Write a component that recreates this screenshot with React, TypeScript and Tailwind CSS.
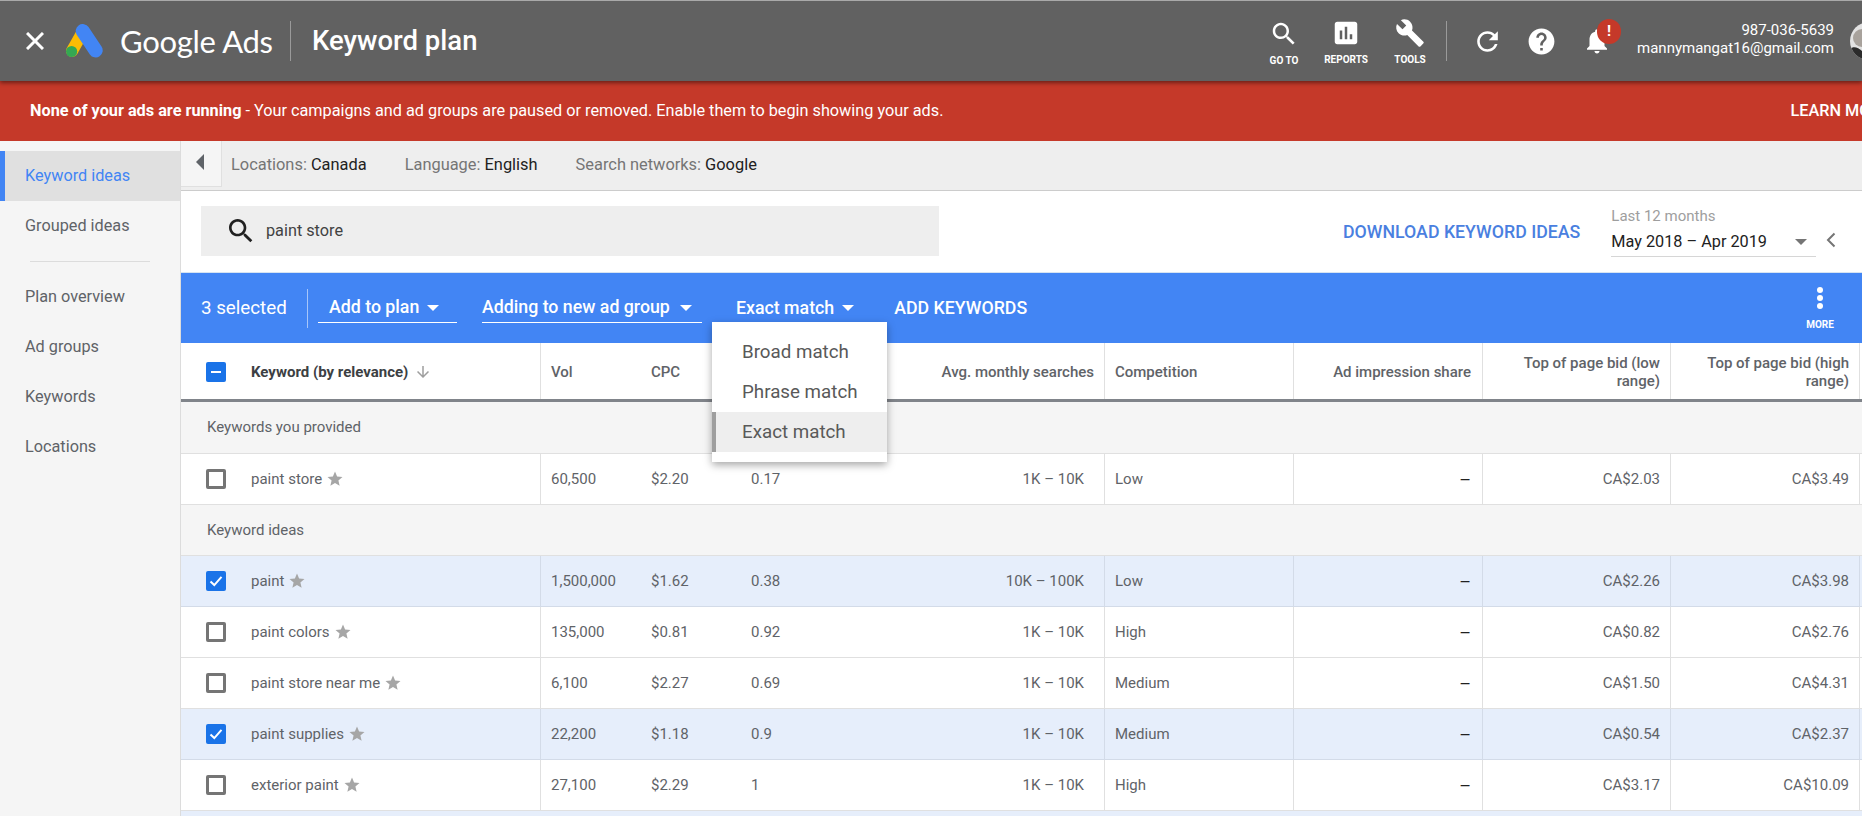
import React from 'react';

type RowData = {
  keyword: string;
  selected?: boolean;
  vol: string;
  cpc: string;
  comp: string;
  avg: string;
  competition: string;
  low: string;
  high: string;
};

const provided: RowData[] = [
  { keyword: 'paint store', vol: '60,500', cpc: '$2.20', comp: '0.17', avg: '1K – 10K', competition: 'Low', low: 'CA$2.03', high: 'CA$3.49' },
];

const ideas: RowData[] = [
  { keyword: 'paint', selected: true, vol: '1,500,000', cpc: '$1.62', comp: '0.38', avg: '10K – 100K', competition: 'Low', low: 'CA$2.26', high: 'CA$3.98' },
  { keyword: 'paint colors', vol: '135,000', cpc: '$0.81', comp: '0.92', avg: '1K – 10K', competition: 'High', low: 'CA$0.82', high: 'CA$2.76' },
  { keyword: 'paint store near me', vol: '6,100', cpc: '$2.27', comp: '0.69', avg: '1K – 10K', competition: 'Medium', low: 'CA$1.50', high: 'CA$4.31' },
  { keyword: 'paint supplies', selected: true, vol: '22,200', cpc: '$1.18', comp: '0.9', avg: '1K – 10K', competition: 'Medium', low: 'CA$0.54', high: 'CA$2.37' },
  { keyword: 'exterior paint', vol: '27,100', cpc: '$2.29', comp: '1', avg: '1K – 10K', competition: 'High', low: 'CA$3.17', high: 'CA$10.09' },
];

const GRID = 'grid grid-cols-[360px_100px_100px_100px_264px_189px_189px_188px_189px_2px]';

const Caret = ({ className = 'fill-white' }: { className?: string }) => (
  <svg width="12" height="6" viewBox="0 0 12 6" className={`shrink-0 ${className}`}>
    <path d="M0 0h12L6 6z" />
  </svg>
);

const Icon = ({ d, size, className = 'fill-white' }: { d: string; size: number; className?: string }) => (
  <svg width={size} height={size} viewBox="0 0 24 24" className={`shrink-0 ${className}`}>
    <path d={d} />
  </svg>
);

const SEARCH = 'M15.5 14h-.79l-.28-.27C15.41 12.59 16 11.11 16 9.5 16 5.91 13.09 3 9.5 3S3 5.91 3 9.5 5.91 16 9.5 16c1.61 0 3.09-.59 4.23-1.57l.27.28v.79l5 4.99L20.49 19l-4.99-5zm-6 0C7.01 14 5 11.99 5 9.5S7.01 5 9.5 5 14 7.01 14 9.5 11.99 14 9.5 14z';
const REPORTS = 'M19 3H5c-1.1 0-2 .9-2 2v14c0 1.1.9 2 2 2h14c1.1 0 2-.9 2-2V5c0-1.1-.9-2-2-2zM9 17H7v-7h2v7zm4 0h-2V7h2v10zm4 0h-2v-4h2v4z';
const WRENCH = 'M22.7 19l-9.1-9.1c.9-2.3.4-5-1.5-6.9-2-2-5-2.4-7.4-1.3L9 6 6 9 1.6 4.7C.4 7.1.9 10.1 2.9 12.1c1.9 1.9 4.6 2.4 6.9 1.5l9.1 9.1c.4.4 1 .4 1.4 0l2.3-2.3c.5-.4.5-1.1.1-1.4z';
const REFRESH = 'M17.65 6.35C16.2 4.9 14.21 4 12 4c-4.42 0-7.99 3.58-7.99 8s3.57 8 7.99 8c3.73 0 6.84-2.55 7.73-6h-2.08c-.82 2.33-3.04 4-5.65 4-3.31 0-6-2.69-6-6s2.69-6 6-6c1.66 0 3.14.69 4.22 1.78L13 11h7V4l-2.35 2.35z';
const HELP = 'M12 2C6.48 2 2 6.48 2 12s4.48 10 10 10 10-4.48 10-10S17.52 2 12 2zm1 17h-2v-2h2v2zm2.07-7.75l-.9.92C13.45 12.9 13 13.5 13 15h-2v-.5c0-1.1.45-2.1 1.17-2.83l1.24-1.26c.37-.36.59-.86.59-1.41 0-1.1-.9-2-2-2s-2 .9-2 2H8c0-2.21 1.79-4 4-4s4 1.79 4 4c0 .88-.36 1.68-.93 2.25z';
const BELL = 'M12 22c1.1 0 2-.9 2-2h-4c0 1.1.89 2 2 2zm6-6v-5c0-3.07-1.64-5.64-4.5-6.32V4c0-.83-.67-1.5-1.5-1.5s-1.5.67-1.5 1.5v.68C7.63 5.36 6 7.92 6 11v5l-2 2v1h16v-1l-2-2z';
const STAR = 'M12 17.27L18.18 21l-1.64-7.03L22 9.24l-7.19-.61L12 2 9.19 8.63 2 9.24l5.46 4.73L5.82 21z';
const ARROW_DOWN = 'M20 12l-1.41-1.41L13 16.17V4h-2v12.17l-5.58-5.59L4 12l8 8 8-8z';

const Logo = () => (
  <svg width="38" height="35" viewBox="0 0 38 35" fill="none" className="shrink-0">
    <path d="M17 7.5L6 27" stroke="#fbbc04" strokeWidth="12" strokeLinecap="round" />
    <path d="M16.7 7L29.7 26.5" stroke="#4285f4" strokeWidth="14" strokeLinecap="round" />
    <circle cx="5.6" cy="27.5" r="5.6" fill="#34a853" />
  </svg>
);

const NavItem = ({ label, d, size, className }: { label: string; d: string; size: number; className: string }) => (
  <div className={`flex flex-col items-center shrink-0 ${className}`}>
    <Icon d={d} size={size} />
    <span className="text-[10px] leading-none font-bold text-white whitespace-nowrap mt-[7px]">{label}</span>
  </div>
);

const Header = () => (
  <header className="relative z-20 h-[81px] shrink-0 flex items-center bg-[#616161] border-t border-[#a9a9a9] shadow-[0_2px_4px_rgba(0,0,0,0.45)]">
    <svg width="18" height="18" viewBox="0 0 18 18" className="ml-[26px] shrink-0 stroke-white" strokeWidth="3">
      <path d="M1 1l16 16M17 1L1 17" />
    </svg>
    <div className="ml-[22px]"><Logo /></div>
    <span className="ml-[16px] text-[31px] leading-none text-white font-[Lato,sans-serif] tracking-[-0.3px] w-[154px] whitespace-nowrap">Google Ads</span>
    <div className="ml-[16px] w-px h-[40px] bg-[#9a9a9a]" />
    <span className="ml-[21px] text-[27.5px] leading-none font-medium text-white whitespace-nowrap">Keyword plan</span>

    <div className="ml-auto flex items-center -mr-[26px]">
      <NavItem label="GO TO" d={SEARCH} size={30} className="w-[40px] pt-[3px]" />
      <NavItem label="REPORTS" d={REPORTS} size={30} className="w-[44px] ml-[20px]" />
      <NavItem label="TOOLS" d={WRENCH} size={30} className="w-[32px] ml-[26px]" />
      <div className="ml-[20px] w-px h-[40px] bg-[#9a9a9a]" />
      <div className="ml-[25px]"><Icon d={REFRESH} size={31} /></div>
      <div className="ml-[23px]"><Icon d={HELP} size={31} /></div>
      <div className="relative ml-[25px]">
        <Icon d={BELL} size={30} />
        <div className="absolute -top-[7px] left-[15px] w-[24px] h-[25px] rounded-full bg-[#c53929] flex items-center justify-center text-white text-[15px] font-bold leading-none">!</div>
      </div>
      <div className="ml-[25px] pb-[5px] flex flex-col items-end text-[15px] leading-[18px] text-white whitespace-nowrap">
        <span>987-036-5639</span>
        <span>mannymangat16@gmail.com</span>
      </div>
      <div className="ml-[16px] w-[38px] h-[38px] rounded-full overflow-hidden bg-[#e2e2e2] shrink-0">
        <svg width="38" height="38" viewBox="0 0 38 38">
          <circle cx="12" cy="16" r="9" fill="#a8a29c" />
          <path d="M0 38V27c3-3 8-2 12 2l4 9z" fill="#2b2b2b" />
        </svg>
      </div>
    </div>
  </header>
);

const Banner = () => (
  <div className="h-[60px] shrink-0 bg-[#c53929] flex items-center pl-[30px] text-[16.25px] text-white whitespace-nowrap overflow-hidden">
    <span className="font-bold">None of your ads are running</span>
    <span>&nbsp;- Your campaigns and ad groups are paused or removed. Enable them to begin showing your ads.</span>
    <span className="ml-[847px] font-medium">LEARN MORE</span>
  </div>
);

const SideLink = ({ label, active }: { label: string; active?: boolean }) => (
  <div className={`h-[50px] flex items-center text-[16.25px] ${active ? 'bg-[#e0e0e0] text-[#4285f4] border-l-[5px] border-[#4285f4] pl-[20px]' : 'text-[#5f6368] pl-[25px]'}`}>
    {label}
  </div>
);

const Sidebar = () => (
  <aside className="w-[181px] shrink-0 bg-[#f5f5f5] border-r border-[#dcdcdc] pt-[10px]">
    <SideLink label="Keyword ideas" active />
    <SideLink label="Grouped ideas" />
    <div className="mx-[30px] mt-[10px] mb-[10px] h-px bg-[#dcdcdc]" />
    <SideLink label="Plan overview" />
    <SideLink label="Ad groups" />
    <SideLink label="Keywords" />
    <SideLink label="Locations" />
  </aside>
);

const FilterBar = () => (
  <div className="h-[50px] shrink-0 bg-[#eeeeee] border-b border-[#cccccc] flex items-start text-[16.4px]">
    <div className="w-[41px] h-[46px] bg-[#f5f5f5] border-r border-b border-[#e0e0e0] flex items-center justify-center">
      <svg width="8" height="16" viewBox="0 0 8 16" className="fill-[#5f6368] mb-[3px] mr-[2px]"><path d="M8 0v16L0 8z" /></svg>
    </div>
    <div className="flex items-center h-[46px] pl-[9px] pt-[2px] whitespace-nowrap">
      <span className="text-[#757575]">Locations:&nbsp;</span><span className="text-[#212121]">Canada</span>
      <span className="text-[#757575] ml-[38px]">Language:&nbsp;</span><span className="text-[#212121]">English</span>
      <span className="text-[#757575] ml-[38px]">Search networks:&nbsp;</span><span className="text-[#212121]">Google</span>
    </div>
  </div>
);

const SearchBar = () => (
  <div className="h-[82px] shrink-0 bg-white border-b border-[#d6e4f2] flex items-center pl-[20px] pr-[16px] pb-[2px]">
    <div className="w-[738px] h-[50px] bg-[#eeeeee] flex items-center pl-[24px]">
      <Icon d={SEARCH} size={32} className="fill-[#212121]" />
      <span className="ml-[9px] pt-[2px] text-[16.25px] text-[#424242]">paint store</span>
    </div>
    <span className="ml-[404px] mt-[3px] text-[17.75px] font-medium text-[#4a7fe0] whitespace-nowrap">DOWNLOAD KEYWORD IDEAS</span>
    <div className="ml-[31px] w-[205px] shrink-0 pt-[2px]">
      <div className="text-[15px] leading-[18px] text-[#9e9e9e]">Last 12 months</div>
      <div className="mt-[4px] h-[28px] border-b border-[#d6d6d6] flex items-center justify-between pr-[9px] text-[16.25px] text-[#212121] whitespace-nowrap">
        <span>May 2018 – Apr 2019</span>
        <Caret className="fill-[#757575]" />
      </div>
    </div>
    <svg width="10" height="16" viewBox="0 0 10 16" fill="none" className="ml-[10px] mt-[18px] stroke-[#757575]" strokeWidth="2">
      <path d="M8.5 1.5L2 8l6.5 6.5" />
    </svg>
  </div>
);

const SelectBox = ({ label, className }: { label: string; className: string }) => (
  <div className={`h-[30px] flex items-center border-b border-white shrink-0 gap-[8px] ${className}`}>
    <span className="text-[17.75px] font-medium text-white whitespace-nowrap">{label}</span>
    <Caret />
  </div>
);

const ActionBar = () => (
  <div className="relative z-10 h-[70px] shrink-0 bg-[#4285f4] flex items-center pl-[20px] text-white">
    <span className="text-[18.75px] whitespace-nowrap w-[106px]">3 selected</span>
    <div className="w-px h-[39px] bg-[#a7c6fa]" />
    <SelectBox label="Add to plan" className="ml-[10px] w-[139px] pl-[11px]" />
    <SelectBox label="Adding to new ad group" className="ml-[25px] w-[220px] !gap-[10px]" />
    <div className="ml-[34px] flex items-center gap-[8px] shrink-0">
      <span className="text-[17.75px] font-medium whitespace-nowrap">Exact match</span>
      <Caret />
    </div>
    <span className="ml-[40px] text-[17.75px] font-medium whitespace-nowrap">ADD KEYWORDS</span>
    <div className="ml-auto mr-[27px] w-[30px] flex flex-col items-center">
      <div className="flex flex-col gap-[2px]">
        <div className="w-[6px] h-[6px] rounded-full bg-white" />
        <div className="w-[6px] h-[6px] rounded-full bg-white" />
        <div className="w-[6px] h-[6px] rounded-full bg-white" />
      </div>
      <span className="mt-[11px] text-[10px] leading-none font-bold">MORE</span>
    </div>

    <div className="absolute left-[531px] top-[49px] w-[175px] h-[140px] bg-white shadow-[0_3px_8px_rgba(0,0,0,0.35)] pt-[10px] text-[18.75px] text-[#595959]">
      <div className="h-[40px] flex items-center pl-[30px]">Broad match</div>
      <div className="h-[40px] flex items-center pl-[30px]">Phrase match</div>
      <div className="h-[40px] flex items-center pl-[26px] bg-[#eeeeee] border-l-[4px] border-[#9e9e9e]">Exact match</div>
    </div>
  </div>
);

const Check = ({ state }: { state: 'off' | 'on' | 'mixed' }) => {
  if (state === 'off') return <div className="w-[20px] h-[20px] rounded-[2px] border-[3px] border-[#757575] bg-white shrink-0" />;
  return (
    <div className="w-[20px] h-[20px] rounded-[2px] bg-[#1a73e8] flex items-center justify-center shrink-0">
      <svg width="16" height="16" viewBox="0 0 16 16" fill="none" stroke="white" strokeWidth="2">
        {state === 'on' ? <path d="M2.5 8.5l3.8 3.6L13.5 3.8" /> : <path d="M3 8h10" />}
      </svg>
    </div>
  );
};

const TableHeader = () => (
  <div className={`${GRID} h-[59px] shrink-0 bg-white border-b-[3px] border-[#80848a] text-[15px] font-medium text-[#5f6368]`}>
    <div className="flex items-center pl-[25px] pt-[2px] border-r border-[#e0e0e0]">
      <Check state="mixed" />
      <span className="ml-[25px] font-bold text-[#3c4043] whitespace-nowrap">Keyword (by relevance)</span>
      <Icon d={ARROW_DOWN} size={18} className="ml-[6px] fill-[#9e9e9e]" />
    </div>
    <div className="flex items-center pl-[10px] pt-[2px]">Vol</div>
    <div className="flex items-center pl-[10px] pt-[2px]">CPC</div>
    <div />
    <div className="flex items-center justify-end pr-[10px] pt-[2px] border-r border-[#e0e0e0]">Avg. monthly searches</div>
    <div className="flex items-center pl-[10px] pt-[2px] border-r border-[#e0e0e0]">Competition</div>
    <div className="flex items-center justify-end pr-[11px] pt-[2px] border-r border-[#e0e0e0]">Ad impression share</div>
    <div className="flex items-center justify-end text-right leading-[18px] pr-[10px] pt-[2px] border-r border-[#e0e0e0]">Top of page bid (low range)</div>
    <div className="flex items-center justify-end text-right leading-[18px] pr-[10px] pt-[2px] border-r border-[#e0e0e0]">Top of page bid (high range)</div>
    <div />
  </div>
);

const GroupRow = ({ label, className }: { label: string; className: string }) => (
  <div className={`shrink-0 bg-[#f5f5f5] border-b border-[#e0e0e0] flex items-center pl-[26px] text-[15px] text-[#5f6368] ${className}`}>{label}</div>
);

const KeywordRow = ({ row }: { row: RowData }) => {
  const line = row.selected ? 'border-[#d3dbe8]' : 'border-[#e0e0e0]';
  return (
    <div className={`${GRID} h-[51px] shrink-0 border-b text-[15px] text-[#5f6368] ${line} ${row.selected ? 'bg-[#e6eefb]' : 'bg-white'}`}>
      <div className={`flex items-center pl-[25px] border-r ${line}`}>
        <Check state={row.selected ? 'on' : 'off'} />
        <span className="ml-[25px] whitespace-nowrap">{row.keyword}</span>
        <Icon d={STAR} size={18} className="ml-[4px] fill-[#a6a6a6]" />
      </div>
      <div className="flex items-center pl-[10px]">{row.vol}</div>
      <div className="flex items-center pl-[10px]">{row.cpc}</div>
      <div className="flex items-center pl-[10px]">{row.comp}</div>
      <div className={`flex items-center justify-end pr-[20px] border-r ${line}`}>{row.avg}</div>
      <div className={`flex items-center pl-[10px] border-r ${line}`}>{row.competition}</div>
      <div className={`flex items-center justify-end pr-[11px] border-r text-[18px] text-[#212121] ${line}`}>–</div>
      <div className={`flex items-center justify-end pr-[10px] border-r ${line}`}>{row.low}</div>
      <div className={`flex items-center justify-end pr-[10px] border-r ${line}`}>{row.high}</div>
      <div />
    </div>
  );
};

export default function App() {
  return (
    <div className="w-[1862px] h-[816px] overflow-hidden flex flex-col font-[Roboto,sans-serif] bg-white">
      <Header />
      <Banner />
      <div className="flex-1 flex min-h-0">
        <Sidebar />
        <main className="flex-1 min-w-0 flex flex-col overflow-hidden">
          <FilterBar />
          <SearchBar />
          <ActionBar />
          <TableHeader />
          <GroupRow label="Keywords you provided" className="h-[52px]" />
          {provided.map(r => <KeywordRow key={r.keyword} row={r} />)}
          <GroupRow label="Keyword ideas" className="h-[51px]" />
          {ideas.map(r => <KeywordRow key={r.keyword} row={r} />)}
          <div className="h-[10px] shrink-0 bg-[#e6eefb]" />
        </main>
      </div>
    </div>
  );
}
